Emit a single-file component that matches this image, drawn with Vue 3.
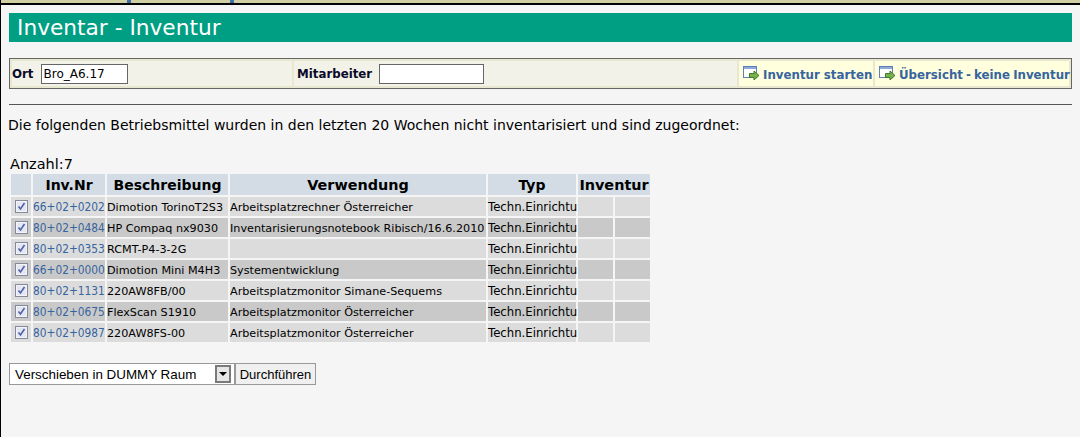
<script setup>
const rows = [
  { nr: '66+02+0202', b: 'Dimotion TorinoT2S3', v: 'Arbeitsplatzrechner Österreicher' },
  { nr: '80+02+0484', b: 'HP Compaq nx9030', v: 'Inventarisierungsnotebook Ribisch/16.6.2010' },
  { nr: '80+02+0353', b: 'RCMT-P4-3-2G', v: '' },
  { nr: '66+02+0000', b: 'Dimotion Mini M4H3', v: 'Systementwicklung' },
  { nr: '80+02+1131', b: '220AW8FB/00', v: 'Arbeitsplatzmonitor Simane-Sequems' },
  { nr: '80+02+0675', b: 'FlexScan S1910', v: 'Arbeitsplatzmonitor Österreicher' },
  { nr: '80+02+0987', b: '220AW8FS-00', v: 'Arbeitsplatzmonitor Österreicher' },
]
const actions = [
  { label: 'Inventur starten', width: '134px', cls: '' },
  { label: 'Übersicht - keine Inventur', width: '194px', cls: 'tight' },
]
</script>

<template>
  <div class="page">
    <div class="strip"><i class="tick first"></i><i class="tick second"></i></div>
    <main class="content">
      <h1 class="banner">Inventar - Inventur</h1>

      <div class="toolbar">
        <div class="cell ort">
          <label>Ort</label>
          <input class="field ort-field" value="Bro_A6.17" />
        </div>
        <div class="cell staff">
          <label>Mitarbeiter</label>
          <input class="field staff-field" />
        </div>
        <a v-for="a in actions" :key="a.label" class="cell action" :class="a.cls" :style="{ width: a.width }">
          <svg width="17" height="15" viewBox="0 0 17 15">
            <rect x="0.5" y="0.5" width="13" height="11" fill="#fff" stroke="#5f7fb8" />
            <rect x="1" y="1" width="12" height="2" fill="#8eaadb" />
            <path d="M6.500 7.500h4.500V5l5 4.500-5 4.500v-2.500H6.500z" fill="#78b050" stroke="#3f7a2a" stroke-width="1" />
          </svg>
          <span>{{ a.label }}</span>
        </a>
      </div>

      <hr class="rule" />

      <p class="intro">Die folgenden Betriebsmittel wurden in den letzten 20 Wochen nicht inventarisiert und sind zugeordnet:</p>

      <p class="count">Anzahl:7</p>
      <table class="list">
        <colgroup>
          <col class="c1" /><col class="c2" /><col class="c3" /><col class="c4" /><col class="c5" /><col class="c6" /><col class="c6" />
        </colgroup>
        <thead>
          <tr>
            <th></th><th>Inv.Nr</th><th>Beschreibung</th><th class="wide">Verwendung</th><th>Typ</th><th colspan="2" class="wide">Inventur</th>
          </tr>
        </thead>
        <tbody>
          <tr v-for="r in rows" :key="r.nr">
            <td class="chk">
              <span class="box">
                <svg width="9" height="9" viewBox="0 0 9 9"><path d="M1.500 4.500l2 2.500 4-6" fill="none" stroke="#4f63a8" stroke-width="1.600" /></svg>
              </span>
            </td>
            <td class="nr-cell"><a class="nr">{{ r.nr }}</a></td>
            <td>{{ r.b }}</td>
            <td>{{ r.v }}</td>
            <td class="typ">Techn.Einrichtu</td>
            <td></td>
            <td></td>
          </tr>
        </tbody>
      </table>

      <div class="controls">
        <div class="select">
          <span>Verschieben in DUMMY Raum</span>
          <span class="arrow"></span>
        </div>
        <button class="go">Durchführen</button>
      </div>
    </main>
  </div>
</template>

<style>
html, body { background: #f5f5f5; }
</style>

<style scoped>
.page {
  height: 437px;
  overflow: hidden;
  box-sizing: border-box;
  border-left: 1px solid #000;
  background: #f5f5f5;
  font-family: "DejaVu Sans", sans-serif;
  color: #000;
}
.strip {
  height: 5px;
  box-sizing: border-box;
  background: #cfcfa3;
  border-bottom: 2px solid #000;
  margin-left: -1px;
  display: flex;
}
.tick { width: 4px; height: 3px; background: #3f6fa8; }
.first { margin-left: 127px; }
.second { margin-left: 99px; }
.content { padding: 8px 8px 0 8px; }
.banner {
  margin: 0;
  height: 29px;
  line-height: 29px;
  padding-left: 8px;
  background: #009e82;
  color: #fff;
  font-size: 21.7px;
  font-weight: 400;
  white-space: nowrap;
}
.toolbar {
  margin-top: 16px;
  height: 31px;
  box-sizing: border-box;
  border: 1px solid #666;
  padding: 2px;
  display: flex;
  gap: 2px;
  background: #e8e8d0;
}
.cell {
  display: flex;
  align-items: center;
  background: #f2f2e8;
  font-size: 11.8px;
  font-weight: 700;
  color: #0a0a2a;
}
.ort { width: 280px; gap: 7px; }
.staff { flex: 1; gap: 7px; padding-left: 3px; }
.field {
  box-sizing: border-box;
  height: 20px;
  border: 1px solid #666;
  background: #fff;
  padding: 0 2px;
  font: 12px "DejaVu Sans", sans-serif;
  color: #000;
}
.ort-field { width: 87px; }
.staff-field { width: 105px; }
.action {
  flex: none;
  background: #fffedd;
  color: #36649e;
  gap: 3px;
  padding-left: 4px;
  box-sizing: border-box;
  white-space: nowrap;
}
.tight { word-spacing: -1px; }
.action svg { margin-top: -1px; flex: none; }
.action span { margin-top: 3px; }
.rule {
  margin: 15px 0 0;
  height: 1px;
  border: 0;
  background: #555;
}
.intro { margin: 10px 0 0 -1px; font-size: 14px; line-height: 20px; }
.count { margin: 21px 0 0 1px; font-size: 14.5px; line-height: 17px; }
.list {
  table-layout: fixed;
  border-collapse: separate;
  border-spacing: 2px;
  width: 643px;
  margin-top: -1px;
  font-size: 11.2px;
}
.c1 { width: 20px; }
.c2 { width: 72px; }
.c3 { width: 121px; }
.c4 { width: 256px; }
.c5 { width: 88px; }
.c6 { width: 35px; }
.list th {
  height: 21px;
  padding: 0;
  background: #d3dce4;
  font-size: 14px;
  font-weight: 700;
  text-align: center;
  white-space: nowrap;
}
.list th.wide { font-size: 14.4px; }
.list td {
  height: 19px;
  padding: 1px 0 0;
  box-sizing: border-box;
  background: #dcdcdc;
  white-space: nowrap;
}
.list tbody tr:nth-child(even) td { background: #c9c9c9; }
.nr { color: #36649e; }
.list td.nr-cell { font-family: "DejaVu Sans Condensed", "DejaVu Sans", sans-serif; font-size: 11.8px; }
.list td.typ { font-size: 11.7px; }
.list td.chk { text-align: center; padding: 0; }
.box {
  display: inline-flex;
  align-items: center;
  justify-content: center;
  width: 13px;
  height: 13px;
  box-sizing: border-box;
  border: 1px solid #85899c;
  box-shadow: inset 0 0 0 1px #f4f4f8;
  background: #e4e6f2;
  vertical-align: middle;
}
.controls { display: flex; margin-top: 19px; }
.select {
  width: 226px;
  height: 22px;
  box-sizing: border-box;
  border: 1px solid #999;
  background: #fff;
  display: flex;
  align-items: center;
  justify-content: space-between;
  padding: 0 3px 0 5px;
  font-family: "Liberation Sans", sans-serif;
  font-size: 13.4px;
  white-space: nowrap;
}
.arrow {
  width: 16px;
  height: 18px;
  box-sizing: border-box;
  border: 2px solid #7a7a7a;
  background: #e6e6e6;
  position: relative;
}
.arrow::after {
  content: "";
  position: absolute;
  left: 2px;
  top: 5px;
  border: 4px solid transparent;
  border-top-color: #000;
  border-bottom: 0;
}
.go {
  height: 22px;
  box-sizing: border-box;
  width: 81px;
  padding: 0;
  border: 1px solid #999;
  background: #f0f0f0;
  font-family: "Liberation Sans", sans-serif;
  font-size: 13px;
  color: #000;
}
</style>
